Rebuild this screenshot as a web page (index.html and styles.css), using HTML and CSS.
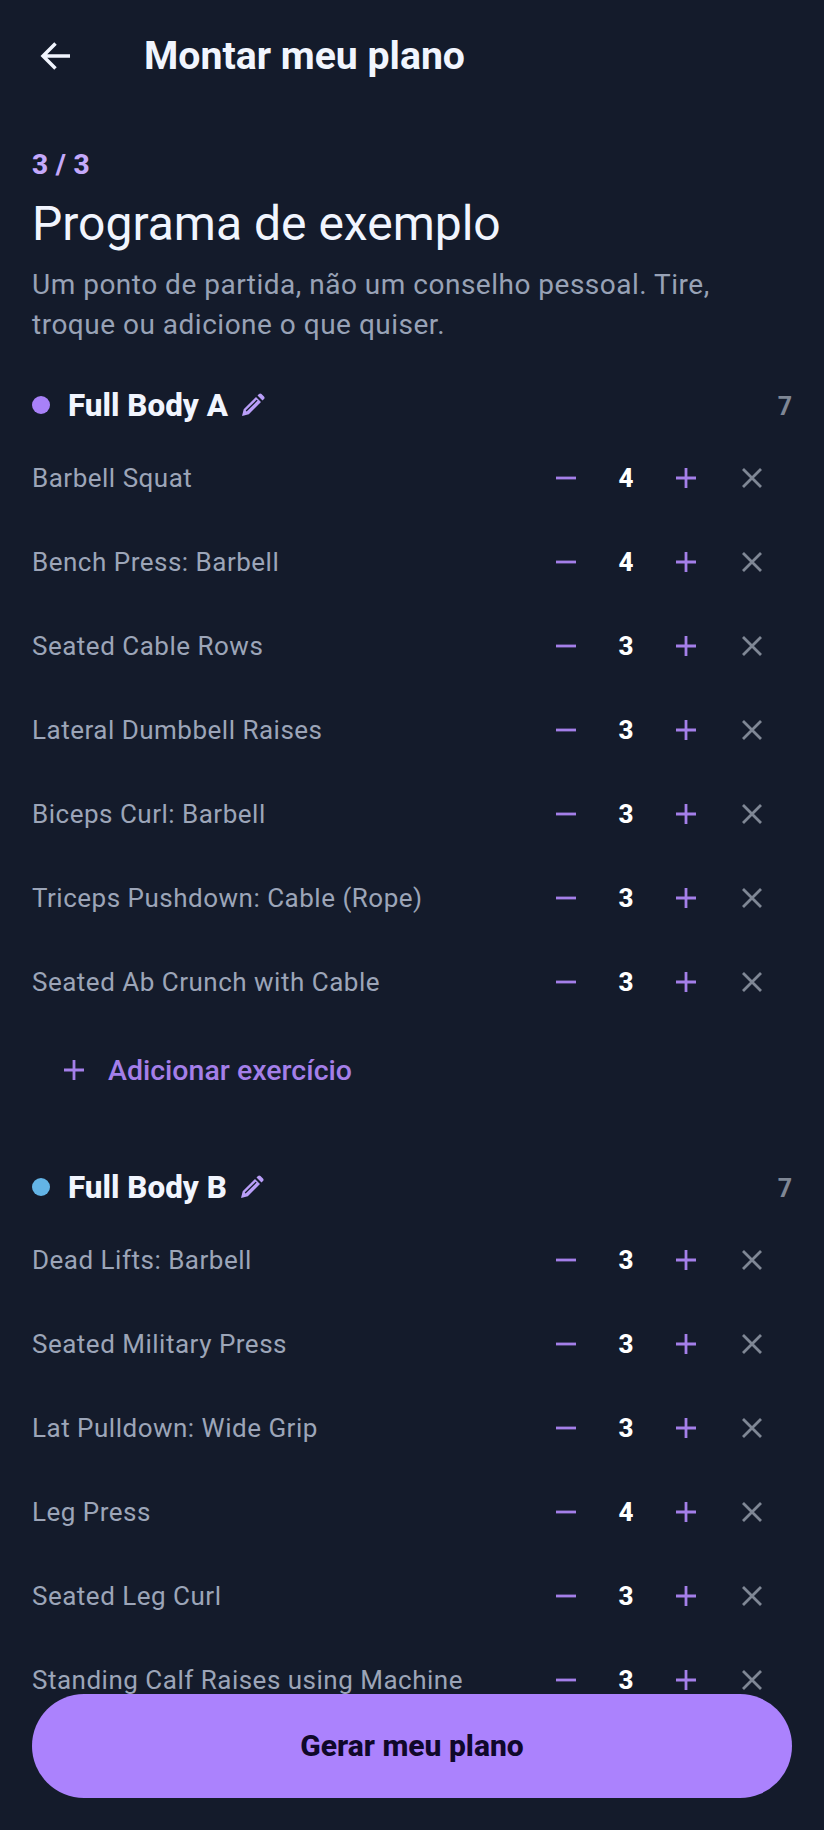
FILE: index.html
```html
<!DOCTYPE html>
<html lang="pt">
<head>
<meta charset="utf-8">
<title>Montar meu plano</title>
<link rel="stylesheet" href="styles.css">
</head>
<body>
<svg class="defs" width="0" height="0" aria-hidden="true">
  <symbol id="i-minus" viewBox="0 0 24 24"><path d="M2 12h20"/></symbol>
  <symbol id="i-plus" viewBox="0 0 24 24"><path d="M12 2v20M2 12h20"/></symbol>
  <symbol id="i-x" viewBox="0 0 24 24"><path d="M3 3l18 18M21 3L3 21"/></symbol>
  <symbol id="i-pen" viewBox="0 0 24 24"><path fill-rule="evenodd" d="M1 23l1.700-6.800L15 4l5 5L7.800 21.300zM4.700 17.500l.9.9L16.600 7.600l-.9-.9zM16.500 2.500L18 1a1.800 1.800 0 0 1 2.500 0L23 3.500a1.800 1.800 0 0 1 0 2.500L21.500 7.500z"/></symbol>
</svg>
<main class="screen">
  <header class="topbar">
    <svg class="back" viewBox="0 0 32 32"><path d="M30 16H3M15.500 3.500L3 16l12.500 12.500"/></svg>
    <h1 class="title">Montar meu plano</h1>
  </header>
  <section class="intro">
    <div class="step">3 / 3</div>
    <h2 class="heading">Programa de exemplo</h2>
    <p class="desc">Um ponto de partida, não um conselho pessoal. Tire, troque ou adicione o que quiser.</p>
  </section>

  <section class="day">
    <div class="day-head">
      <span class="dot dot-a"></span><span class="day-name">Full Body A</span>
      <svg class="pen"><use href="#i-pen"/></svg>
      <span class="count">7</span>
    </div>
    <div class="row"><span class="name">Barbell Squat</span><svg class="ic minus"><use href="#i-minus"/></svg><span class="num">4</span><svg class="ic plus"><use href="#i-plus"/></svg><svg class="ic del"><use href="#i-x"/></svg></div>
    <div class="row"><span class="name">Bench Press: Barbell</span><svg class="ic minus"><use href="#i-minus"/></svg><span class="num">4</span><svg class="ic plus"><use href="#i-plus"/></svg><svg class="ic del"><use href="#i-x"/></svg></div>
    <div class="row"><span class="name">Seated Cable Rows</span><svg class="ic minus"><use href="#i-minus"/></svg><span class="num">3</span><svg class="ic plus"><use href="#i-plus"/></svg><svg class="ic del"><use href="#i-x"/></svg></div>
    <div class="row"><span class="name">Lateral Dumbbell Raises</span><svg class="ic minus"><use href="#i-minus"/></svg><span class="num">3</span><svg class="ic plus"><use href="#i-plus"/></svg><svg class="ic del"><use href="#i-x"/></svg></div>
    <div class="row"><span class="name">Biceps Curl: Barbell</span><svg class="ic minus"><use href="#i-minus"/></svg><span class="num">3</span><svg class="ic plus"><use href="#i-plus"/></svg><svg class="ic del"><use href="#i-x"/></svg></div>
    <div class="row"><span class="name">Triceps Pushdown: Cable (Rope)</span><svg class="ic minus"><use href="#i-minus"/></svg><span class="num">3</span><svg class="ic plus"><use href="#i-plus"/></svg><svg class="ic del"><use href="#i-x"/></svg></div>
    <div class="row"><span class="name">Seated Ab Crunch with Cable</span><svg class="ic minus"><use href="#i-minus"/></svg><span class="num">3</span><svg class="ic plus"><use href="#i-plus"/></svg><svg class="ic del"><use href="#i-x"/></svg></div>
    <div class="add"><svg class="add-ic"><use href="#i-plus"/></svg><span>Adicionar exercício</span></div>
  </section>

  <section class="day day-next">
    <div class="day-head">
      <span class="dot dot-b"></span><span class="day-name">Full Body B</span>
      <svg class="pen"><use href="#i-pen"/></svg>
      <span class="count">7</span>
    </div>
    <div class="row"><span class="name">Dead Lifts: Barbell</span><svg class="ic minus"><use href="#i-minus"/></svg><span class="num">3</span><svg class="ic plus"><use href="#i-plus"/></svg><svg class="ic del"><use href="#i-x"/></svg></div>
    <div class="row"><span class="name">Seated Military Press</span><svg class="ic minus"><use href="#i-minus"/></svg><span class="num">3</span><svg class="ic plus"><use href="#i-plus"/></svg><svg class="ic del"><use href="#i-x"/></svg></div>
    <div class="row"><span class="name">Lat Pulldown: Wide Grip</span><svg class="ic minus"><use href="#i-minus"/></svg><span class="num">3</span><svg class="ic plus"><use href="#i-plus"/></svg><svg class="ic del"><use href="#i-x"/></svg></div>
    <div class="row"><span class="name">Leg Press</span><svg class="ic minus"><use href="#i-minus"/></svg><span class="num">4</span><svg class="ic plus"><use href="#i-plus"/></svg><svg class="ic del"><use href="#i-x"/></svg></div>
    <div class="row"><span class="name">Seated Leg Curl</span><svg class="ic minus"><use href="#i-minus"/></svg><span class="num">3</span><svg class="ic plus"><use href="#i-plus"/></svg><svg class="ic del"><use href="#i-x"/></svg></div>
    <div class="row"><span class="name">Standing Calf Raises using Machine</span><svg class="ic minus"><use href="#i-minus"/></svg><span class="num">3</span><svg class="ic plus"><use href="#i-plus"/></svg><svg class="ic del"><use href="#i-x"/></svg></div>
  </section>

  <button class="cta">Gerar meu plano</button>
</main>
</body>
</html>
```
FILE: styles.css
```css
html, body { margin: 0; padding: 0; background: #141b2b; }
.defs { position: absolute; }
.screen {
  position: relative;
  width: 824px;
  height: 1830px;
  overflow: hidden;
  background: #141b2b;
  font-family: Roboto, sans-serif;
  color: #f1f5fe;
}
.topbar { display: flex; align-items: center; height: 112px; padding-left: 40px; }
.back { width: 32px; height: 32px; fill: none; stroke: #f1f5fe; stroke-width: 3.500; }
.title { margin: 0 0 0 72px; font-size: 39.200px; line-height: 48px; font-weight: 700; }
.intro { padding: 37px 32px 0; }
.step { font-size: 28px; line-height: 32px; font-weight: 800; color: #c4a9fb; letter-spacing: 0.3px; }
.heading { margin: 15px 0 0; font-size: 48px; line-height: 56px; font-weight: 400; }
.desc { margin: 13px 0 0; width: 740px; font-size: 28px; line-height: 40px; color: #98a2b6; letter-spacing: 0.5px; }
.day { padding: 0 32px; }
.day-head { display: flex; align-items: center; height: 62px; margin-top: 29px; }
.day-next { margin-top: 40px; }
.dot { width: 18px; height: 18px; border-radius: 50%; margin-right: 18px; }
.dot-a { background: #a881f8; }
.dot-b { background: #63b4e6; }
.day-name { font-size: 31.400px; font-weight: 800; }
.pen { width: 24px; height: 24px; margin-left: 13px; fill: #b99ef8; }
.count { margin-left: auto; padding-top: 2px; font-size: 25px; font-weight: 700; color: #7f8795; }
.row { display: flex; align-items: center; height: 84px; }
.name { flex: 1; font-size: 26px; color: #9ca5b8; letter-spacing: 0.5px; white-space: nowrap; }
.ic { width: 24px; height: 24px; fill: none; stroke-width: 2.800; }
.minus, .plus { stroke: #a47fe9; }
.del { stroke: #7f8795; margin: 0 28px 0 42px; }
.num { width: 96px; text-align: center; font-size: 26px; font-weight: 800; color: #fff; }
.add { display: flex; align-items: center; height: 92px; padding-left: 30px; color: #a47fe9; font-size: 28.500px; font-weight: 500; }
.add-ic { width: 24px; height: 24px; margin-right: 22px; fill: none; stroke: #a47fe9; stroke-width: 2.800; }
.cta {
  position: absolute;
  left: 32px;
  top: 1694px;
  width: 760px;
  height: 104px;
  padding-bottom: 2px;
  border: 0;
  border-radius: 52px;
  background: #ab82fd;
  color: #10082a;
  font-family: Roboto, sans-serif;
  font-size: 30px;
  font-weight: 800;
}
```
